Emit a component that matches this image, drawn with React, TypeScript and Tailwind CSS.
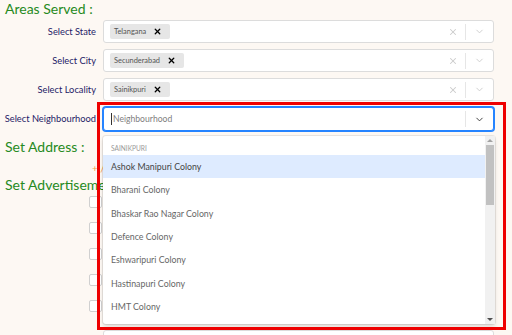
import { X, ChevronDown } from 'lucide-react';

const font = { fontFamily: 'Lato, "Open Sans", sans-serif' };

const neighbourhoods = [
  'Ashok Manipuri Colony',
  'Bharani Colony',
  'Bhaskar Rao Nagar Colony',
  'Defence Colony',
  'Eshwaripuri Colony',
  'Hastinapuri Colony',
  'HMT Colony',
];

function Indicators({ clear = true }: { clear?: boolean }) {
  return (
    <div className="flex h-full items-center">
      {clear && <X size={10} strokeWidth={2.5} className="mr-[7px] text-[#cccccc]" />}
      <span className="h-[16px] w-px bg-[#e6e6e6]" />
      <ChevronDown size={11} strokeWidth={2} className={`mx-[8px] ${clear ? 'text-[#cccccc]' : 'text-[#333333]'}`} />
    </div>
  );
}

function SelectRow({ label, value }: { label: string; value: string }) {
  return (
    <div className="flex h-[23px] items-center">
      <label className="w-[97px] shrink-0 whitespace-nowrap pr-[1px] text-right text-[9.3px] text-[#1e1a66]">{label}</label>
      <div className="ml-[6px] flex h-full w-[391px] items-center justify-between rounded-[3px] border border-[#dcdcdc] bg-white">
        <span className="ml-[6px] flex h-[15px] items-center rounded-[2px] bg-[#e6e6e6] pl-[4px] pr-[8px] text-[7.4px] text-[#555]">
          {value}
          <X size={9} strokeWidth={3.5} className="ml-[7px] text-black" />
        </span>
        <Indicators />
      </div>
    </div>
  );
}

export default function App() {
  return (
    <div className="relative h-[335px] w-[512px] overflow-hidden bg-[#fdf8f3]" style={font}>
      <div className="pl-[5px]">
        <h2 className="h-[20px] whitespace-nowrap text-[14px] leading-[18px] text-[#268a22]">Areas Served :</h2>
        <div className="-ml-[5px] flex flex-col gap-[6px]">
          <SelectRow label="Select State" value="Telangana" />
          <SelectRow label="Select City" value="Secunderabad" />
          <SelectRow label="Select Locality" value="Sainikpuri" />
          <div className="relative flex h-[24px] items-center">
            <label className="w-[97px] shrink-0 whitespace-nowrap pr-[1px] text-right text-[9.3px] text-[#1e1a66]">Select Neighbourhood</label>
            <div className="ml-[6px] flex h-full w-[391px] items-center justify-between rounded-[3px] border border-[#2684ff] bg-white shadow-[0_0_0_1px_#2684ff]">
              <span className="ml-[7px] flex items-center text-[8.6px] text-[#808080]">
                <span className="mr-px h-[12px] w-px bg-[#333]" />
                Neighbourhood
              </span>
              <Indicators clear={false} />
            </div>
          </div>
        </div>
        <h2 className="mt-[5px] h-[22px] whitespace-nowrap text-[14px] leading-[22px] text-[#268a22]">Set Address :</h2>
        <div className="h-[17px] pl-[87px] pt-[3px] text-[10px] leading-[14px] text-[#f5a04a]">+ /</div>
        <h2 className="h-[20px] whitespace-nowrap text-[14px] leading-[20px] text-[#268a22]">Set Advertisement :</h2>
        <div className="ml-[84px] mt-[1px] flex flex-col gap-[14px]">
          {[0, 1, 2, 3, 4].map((i) => (
            <span key={i} className="h-[12px] w-[13px] rounded-[2px] border border-[#d0d0d0] bg-white" />
          ))}
        </div>
      </div>

      {/* neighbourhood dropdown, open */}
      <div className="absolute left-[103px] top-[136px] flex h-[188px] w-[392px] rounded-[3px] bg-white shadow-[0_0_0_1px_rgba(0,0,0,0.08),0_3px_4px_rgba(0,0,0,0.12)]">
        <div className="flex-1 pt-[6px]">
          <div className="h-[13px] pl-[8px] text-[6.6px] uppercase leading-[13px] text-[#999]">Sainikpuri</div>
          {neighbourhoods.map((n, i) => (
            <div
              key={n}
              className={`flex h-[23.3px] items-center pl-[8px] text-[8.8px] ${i === 0 ? 'bg-[#deebff] text-[#444]' : 'text-[#666]'}`}
            >
              {n}
            </div>
          ))}
        </div>
        <div className="flex w-[10px] flex-col items-center bg-[#f1f1f1] py-[3px]">
          <span className="h-0 w-0 border-x-[3px] border-b-[3px] border-x-transparent border-b-[#a3a3a3]" />
          <span className="mt-[3px] h-[60px] w-[8px] bg-[#c1c1c1]" />
          <span className="flex-1" />
          <span className="h-0 w-0 border-x-[3px] border-t-[3px] border-x-transparent border-t-[#505050]" />
        </div>
      </div>

      {/* next select peeking below */}
      <div className="absolute left-[103px] top-[330px] h-[10px] w-[391px] rounded-[3px] border border-[#dcdcdc] bg-white" />

      {/* red annotation frame */}
      <div className="pointer-events-none absolute left-[97px] top-[102px] h-[228px] w-[409px] border-[3px] border-[#ee0000]" />
    </div>
  );
}
